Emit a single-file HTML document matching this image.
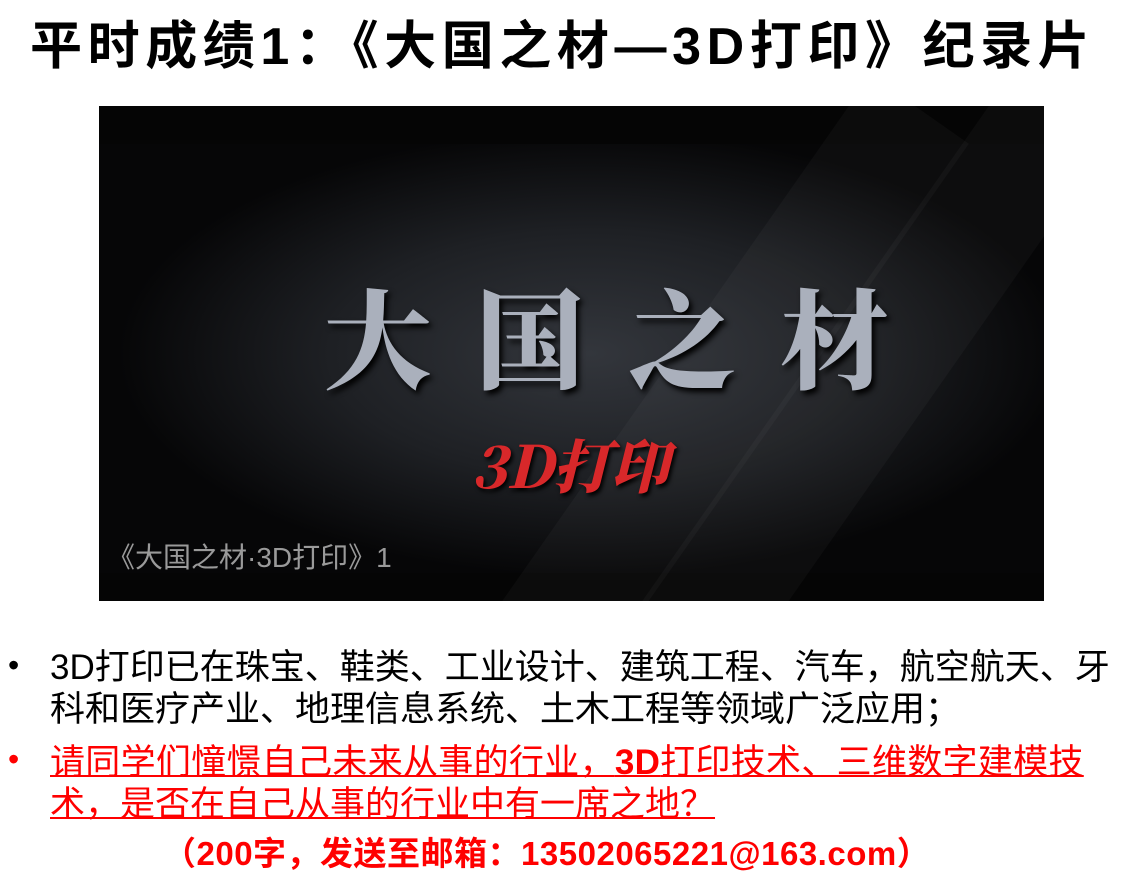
<!DOCTYPE html>
<html><head><meta charset="utf-8"><style>
body{margin:0;width:1136px;height:879px;background:#fff;position:relative;overflow:hidden;font-family:"Liberation Sans","Noto Sans CJK SC",sans-serif;}
.t{position:absolute;left:30px;top:4px;font-size:52px;font-weight:bold;white-space:nowrap;letter-spacing:5.6px;color:#000;}
.img{position:absolute;left:99px;top:106px;width:945px;height:495px;background:radial-gradient(ellipse 50% 45% at 52% 50%,#33363c 0%,#1e2024 55%,#060607 100%);overflow:hidden;}
.img .diag{position:absolute;width:120px;height:700px;background:rgba(255,255,255,0.03);transform:rotate(35deg);}
.band{position:absolute;left:0;width:945px;background:#050505;}
.big{position:absolute;left:225px;top:150px;font-family:"Noto Serif CJK SC",serif;font-weight:900;font-size:108px;letter-spacing:44px;color:#aab0bc;text-shadow:3px 4px 6px #000;}
.red{position:absolute;left:372px;top:315px;font-family:"Noto Serif CJK SC",serif;font-weight:900;font-size:58px;color:#d8282a;text-shadow:2px 3px 4px #000;font-style:italic;}
.cap{position:absolute;left:8px;top:430px;font-size:28px;color:#9a9a9a;}
.b{position:absolute;font-size:35px;white-space:nowrap;line-height:42px;}
.dot{position:absolute;left:8px;font-size:32px;}
</style></head><body>
<div class="t">平时成绩1：《大国之材—3D打印》纪录片</div>
<div class="img">
<div class="band" style="top:0;height:38px"></div>
<div class="band" style="bottom:0;height:28px"></div>
<div class="diag" style="left:560px;top:-60px"></div>
<div class="diag" style="left:700px;top:-60px"></div>
<div class="big">大国之材</div>
<div class="red">3D打印</div>
<div class="cap">《大国之材·3D打印》1</div>
</div>
<div class="dot" style="top:647px">•</div>
<div class="b" style="left:50px;top:647px;color:#000">3D打印已在珠宝、鞋类、工业设计、建筑工程、汽车，航空航天、牙</div>
<div class="b" style="left:50px;top:689px;color:#000">科和医疗产业、地理信息系统、土木工程等领域广泛应用；</div>
<div class="dot" style="top:741px;color:#f00">•</div>
<div class="b" style="left:50px;top:742px;color:#f00;text-decoration:underline;text-decoration-thickness:2px;letter-spacing:0.3px">请同学们憧憬自己未来从事的行业，<b>3D</b>打印技术、三维数字建模技</div>
<div class="b" style="left:50px;top:784px;color:#f00;text-decoration:underline;text-decoration-thickness:2px;">术，是否在自己从事的行业中有一席之地？</div>
<div class="b" style="left:163px;top:833px;color:#f00;font-weight:bold;font-size:33px;letter-spacing:0.5px">（200字，发送至邮箱：13502065221@163.com）</div>
</body></html>
